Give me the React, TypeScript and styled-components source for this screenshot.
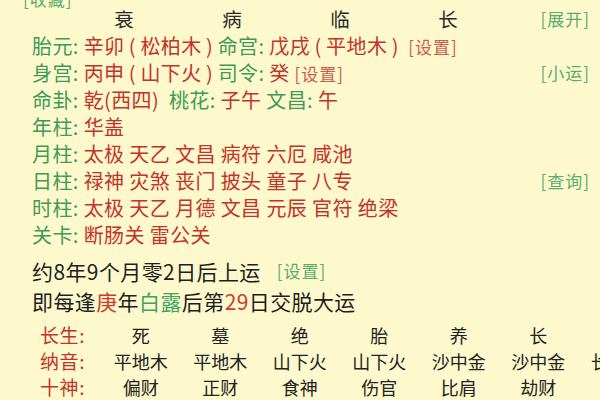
import React from 'react';
import styled, { createGlobalStyle } from 'styled-components';

const GlobalStyle = createGlobalStyle`
  html, body {
    margin: 0;
    padding: 0;
    width: 600px;
    height: 400px;
    overflow: hidden;
    background: #fdf9cd;
  }
  body {
    font-family: "Noto Sans CJK SC", "Noto Sans", sans-serif;
  }
`;

const GREEN = '#3f9a58';
const RED = '#c2332b';
const LINK_GREEN = '#5aad6c';
const LINK_RED = '#cf5a4c';

const Page = styled.div`
  width: 600px;
  height: 400px;
  box-sizing: border-box;
  padding: 0 10px 0 32px;
  display: flex;
  flex-direction: column;
  overflow: hidden;
  background: #fdf9cd;
`;

const CollectRow = styled.div`
  height: 14px;
  line-height: 14px;
  margin-top: -8px;
  margin-left: -9px;
  display: flex;
  align-items: center;
`;

const Link = styled.span<{ $tone?: 'green' | 'red' }>`
  font-size: 17px;
  letter-spacing: 1px;
  color: ${(p) => (p.$tone === 'red' ? LINK_RED : LINK_GREEN)};
  white-space: nowrap;
`;

const RightLink = styled(Link)`
  margin-left: auto;
`;

const HeaderRow = styled.div`
  height: 26px;
  line-height: 26px;
  display: flex;
  align-items: center;
  padding-left: 38px;
`;

const HeaderCell = styled.div`
  width: 108px;
  text-align: center;
  font-size: 19.5px;
  color: #2a2a2a;
`;

const InfoRow = styled.div`
  height: 27px;
  line-height: 27px;
  display: flex;
  align-items: center;
  font-size: 20px;
  letter-spacing: 0.4px;
  white-space: nowrap;
`;

const Line = styled.span`
  white-space: pre;
`;

const Label = styled.span`
  color: ${GREEN};
`;

const Value = styled.span`
  color: ${RED};
`;

const Paren = styled.span`
  display: inline-block;
  width: 16px;
  text-align: center;
`;

const Sentence = styled.div<{ $gap?: number }>`
  height: 30px;
  line-height: 30px;
  margin-top: ${(p) => p.$gap ?? 0}px;
  display: flex;
  align-items: center;
  gap: 16px;
  font-size: 21px;
  letter-spacing: 0.4px;
  color: #1e1e1e;
  white-space: nowrap;
`;

const Mark = styled.span<{ $tone: 'green' | 'red' }>`
  color: ${(p) => (p.$tone === 'red' ? '#d2382c' : '#3aa55e')};
`;

const Table = styled.div`
  margin-top: 6px;
  margin-left: 8px;
  display: grid;
  grid-template-columns: 61px repeat(7, 79.5px);
  grid-auto-rows: 26px;
  line-height: 26px;
  align-items: center;
`;

const RowLabel = styled.div`
  font-size: 19px;
  letter-spacing: 0.6px;
  color: ${RED};
  white-space: nowrap;
`;

const Cell = styled.div`
  font-size: 18px;
  color: #222;
  text-align: center;
  white-space: nowrap;
`;

const header = ['衰', '病', '临', '长'];

const tableRows: { label: string; cells: string[] }[] = [
  { label: '长生:', cells: ['死', '墓', '绝', '胎', '养', '长', '长生'] },
  { label: '纳音:', cells: ['平地木', '平地木', '山下火', '山下火', '沙中金', '沙中金', '长流水'] },
  { label: '十神:', cells: ['偏财', '正财', '食神', '伤官', '比肩', '劫财', '七杀'] },
];

const shensha: { label: string; items: string; link?: string }[] = [
  { label: '年柱', items: '华盖' },
  { label: '月柱', items: '太极 天乙 文昌 病符 六厄 咸池' },
  { label: '日柱', items: '禄神 灾煞 丧门 披头 童子 八专', link: '[查询]' },
  { label: '时柱', items: '太极 天乙 月德 文昌 元辰 官符 绝梁' },
  { label: '关卡', items: '断肠关 雷公关' },
];

export default function App() {
  return (
    <>
      <GlobalStyle />
      <Page>
        <CollectRow>
          <Link>[收藏]</Link>
        </CollectRow>

        <HeaderRow>
          {header.map((h) => (
            <HeaderCell key={h}>{h}</HeaderCell>
          ))}
          <RightLink>[展开]</RightLink>
        </HeaderRow>

        <InfoRow>
          <Line>
            <Label>胎元: </Label>
            <Value>
              辛卯<Paren>(</Paren>松柏木<Paren>)</Paren>
            </Value>
            <Label>命宫: </Label>
            <Value>
              戊戌<Paren>(</Paren>平地木<Paren>)</Paren>{' '}
            </Value>
            <Link $tone="red">[设置]</Link>
          </Line>
        </InfoRow>

        <InfoRow>
          <Line>
            <Label>身宫: </Label>
            <Value>
              丙申<Paren>(</Paren>山下火<Paren>)</Paren>
            </Value>
            <Label>司令: </Label>
            <Value>癸 </Value>
            <Link $tone="red">[设置]</Link>
          </Line>
          <RightLink>[小运]</RightLink>
        </InfoRow>

        <InfoRow>
          <Line>
            <Label>命卦: </Label>
            <Value>乾(西四)  </Value>
            <Label>桃花: </Label>
            <Value>子午 </Value>
            <Label>文昌: </Label>
            <Value>午</Value>
          </Line>
        </InfoRow>

        {shensha.map((row) => (
          <InfoRow key={row.label}>
            <Line>
              <Label>{row.label}: </Label>
              <Value>{row.items}</Value>
            </Line>
            {row.link && <RightLink>{row.link}</RightLink>}
          </InfoRow>
        ))}

        <Sentence $gap={8}>
          <span>约8年9个月零2日后上运</span>
          <Link>[设置]</Link>
        </Sentence>

        <Sentence>
          <span>
            即每逢<Mark $tone="red">庚</Mark>年<Mark $tone="green">白露</Mark>后第
            <Mark $tone="red">29</Mark>日交脱大运
          </span>
        </Sentence>

        <Table>
          {tableRows.map((row) => (
            <React.Fragment key={row.label}>
              <RowLabel>{row.label}</RowLabel>
              {row.cells.map((c, i) => (
                <Cell key={i}>{c}</Cell>
              ))}
            </React.Fragment>
          ))}
        </Table>
      </Page>
    </>
  );
}
